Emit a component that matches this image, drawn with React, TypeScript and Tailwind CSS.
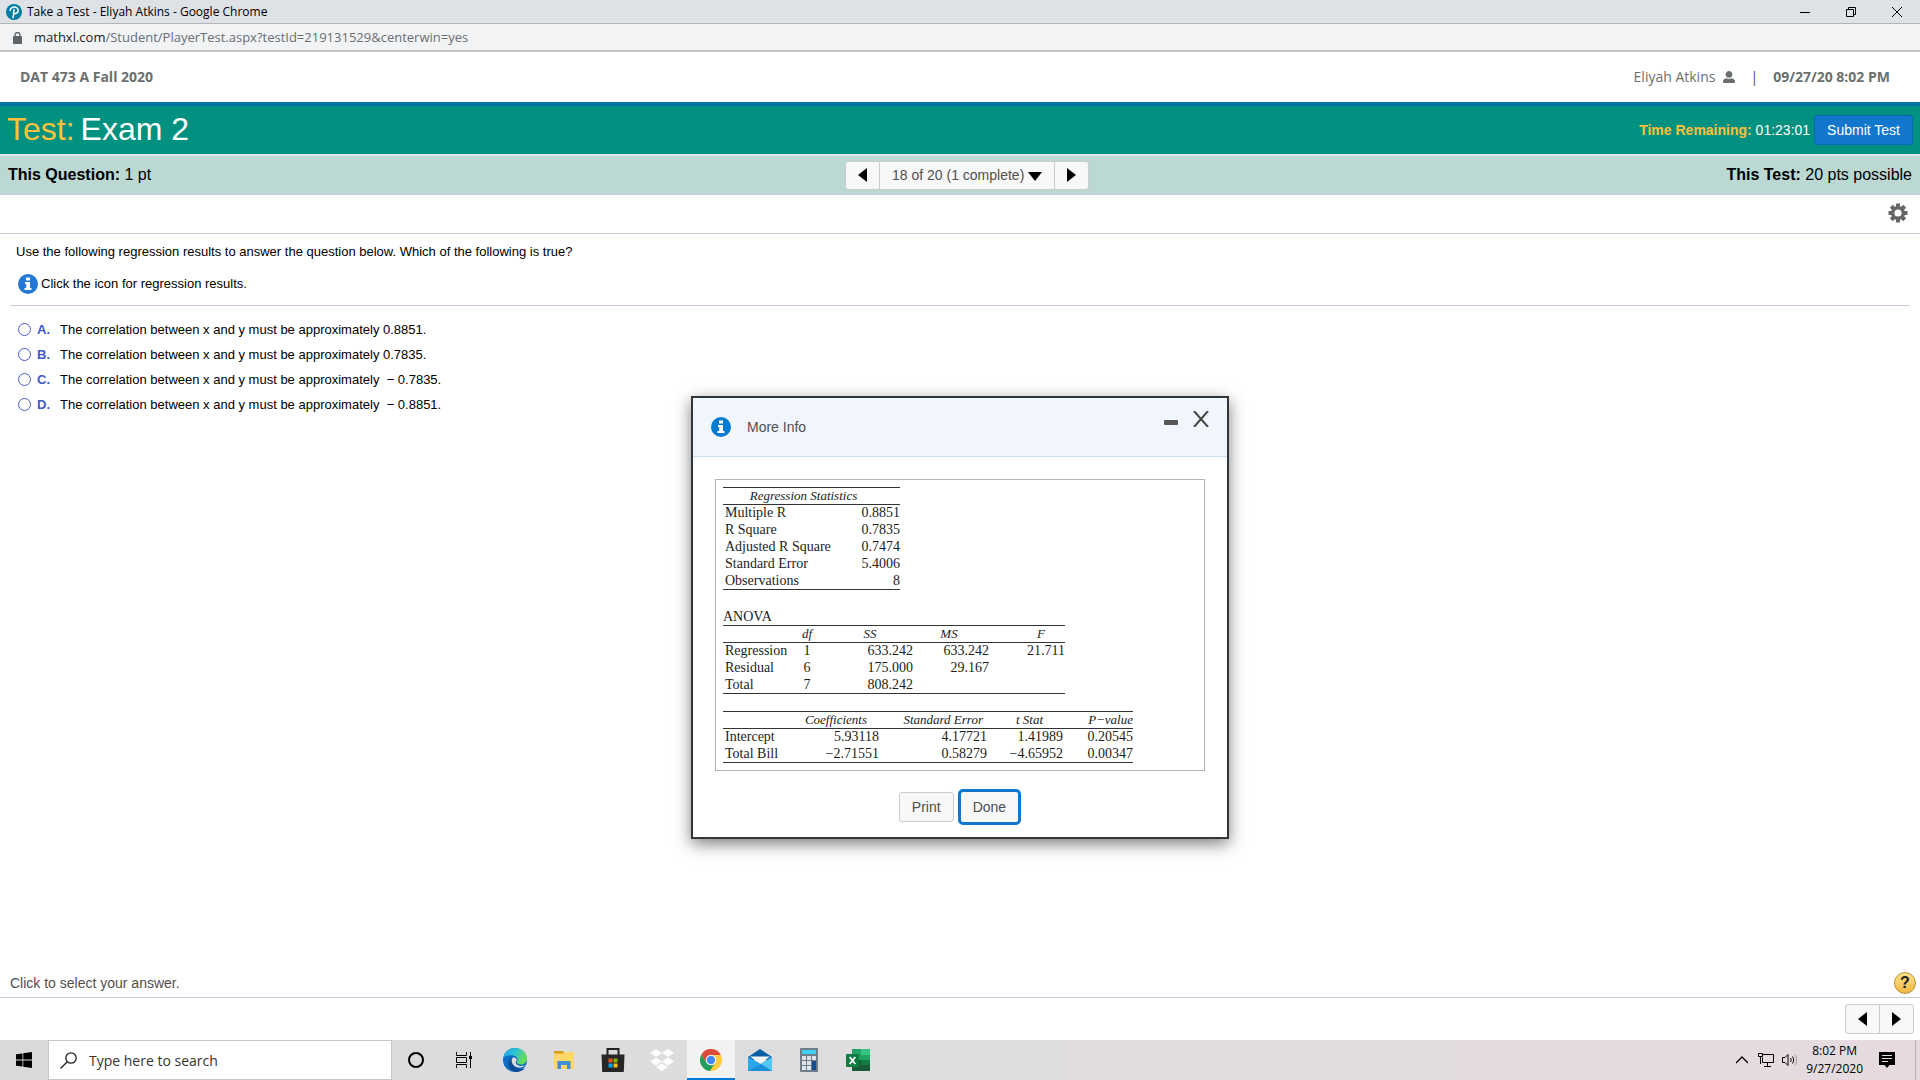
import React, { useState } from 'react'
import { FaUserAlt } from 'react-icons/fa'

const choices = [
  { letter: 'A', value: '0.8851' },
  { letter: 'B', value: '0.7835' },
  { letter: 'C', value: ' \u2212 0.7835' },
  { letter: 'D', value: ' \u2212 0.8851' }
]

const regressionStats = [
  ['Multiple R', '0.8851'],
  ['R Square', '0.7835'],
  ['Adjusted R Square', '0.7474'],
  ['Standard Error', '5.4006'],
  ['Observations', '8']
]

const anovaRows = [
  ['Regression', '1', '633.242', '633.242', '21.711'],
  ['Residual', '6', '175.000', '29.167', ''],
  ['Total', '7', '808.242', '', '']
]

const coefficientRows = [
  ['Intercept', '5.93118', '4.17721', '1.41989', '0.20545'],
  ['Total Bill', '\u22122.71551', '0.58279', '\u22124.65952', '0.00347']
]

const Triangle = ({ dir }: { dir: 'left' | 'right' | 'down' }) => {
  const points = {
    left: '11,0 11,14 2,7',
    right: '2,0 2,14 11,7',
    down: '0,2 14,2 7,11'
  }
  return (
    <svg width="14" height="14" viewBox="0 0 14 14" aria-hidden="true">
      <polygon points={points[dir]} fill="#000" />
    </svg>
  )
}

const InfoIcon = ({ color }: { color: string }) => (
  <svg width="20" height="20" viewBox="0 0 20 20" aria-hidden="true">
    <circle cx="10" cy="10" r="10" fill={color} />
    <rect x="8" y="3.5" width="4" height="3" fill="#fff" />
    <path d="M7 8h5v6h1.5v2h-7v-2H8.200v-4H7z" fill="#fff" />
  </svg>
)

const PearsonLogo = () => (
  <svg width="16" height="16" viewBox="0 0 16 16" aria-hidden="true">
    <circle cx="8" cy="8" r="8" fill="#007fa3" />
    <path
      d="M4.200 6.400C4.600 3.800 7 2.800 9 3.100c2.700.4 3.700 2.600 3 4.500-.6 1.700-2.300 2.400-4.500 2.200M8 5.500c-.4 2.500-.2 4.800-.9 8"
      fill="none"
      stroke="#fff"
      strokeWidth="1.500"
      strokeLinecap="round"
    />
  </svg>
)

const Gear = () => (
  <svg width="20" height="20" viewBox="-10 -10 20 20" aria-hidden="true">
    <g fill="#666">
      {[0, 45, 90, 135].map(angle => (
        <rect key={angle} x="-2" y="-9.500" width="4" height="19" transform={`rotate(${angle})`} />
      ))}
      <circle r="7" />
    </g>
    <circle r="3.600" fill="#fff" />
  </svg>
)

const TitleBar = () => (
  <div className="flex h-6 items-center justify-between border-b border-[#b3b4b6] bg-[#dee1e6] pl-[6px]">
    <div className="flex items-center gap-[5px] text-xs text-black">
      <PearsonLogo />
      <span>Take a Test - Eliyah Atkins - Google Chrome</span>
    </div>
    <div className="flex">
      <button type="button" aria-label="Minimize window" className="flex h-5 w-[46px] items-center justify-center">
        <svg width="10" height="10" viewBox="0 0 10 10" stroke="#000"><path d="M0 5.500h10" /></svg>
      </button>
      <button type="button" aria-label="Restore window" className="flex h-5 w-[46px] items-center justify-center">
        <svg width="10" height="10" viewBox="0 0 10 10" fill="none" stroke="#000">
          <path d="M.5 2.500h7v7h-7zM2.500 2.500v-2h7v7h-2" />
        </svg>
      </button>
      <button type="button" aria-label="Close window" className="flex h-5 w-[46px] items-center justify-center">
        <svg width="10" height="10" viewBox="0 0 10 10" stroke="#000"><path d="M0 0l10 10M10 0L0 10" /></svg>
      </button>
    </div>
  </div>
)

const AddressBar = () => (
  <div className="flex h-7 items-center gap-3 border-b-2 border-[#c2c3c5] bg-[#f1f3f4] pt-px pl-[13px] text-[13px] text-[#6b6e72]">
    <svg width="9" height="12" viewBox="0 0 9 12" aria-hidden="true">
      <rect y="4" width="9" height="8" rx="1" fill="#5f6368" />
      <path d="M2 4.500V3a2.500 2.500 0 0 1 5 0v1.500" fill="none" stroke="#5f6368" strokeWidth="1.300" />
    </svg>
    <span>
      <span className="text-[#202124]">mathxl.com</span>/Student/PlayerTest.aspx?testId=219131529&amp;centerwin=yes
    </span>
  </div>
)

const CourseHeader = () => (
  <header className="flex h-[50px] items-center justify-between bg-white pr-[30px] pl-5 font-['Open_Sans',sans-serif] text-sm text-[#6a7070]">
    <span className="font-bold">DAT 473 A Fall 2020</span>
    <div className="flex items-center">
      <span>Eliyah Atkins</span>
      <FaUserAlt className="ml-2 size-3" />
      <span className="mx-[15px] text-[#4a4a8a]">|</span>
      <span className="font-bold">09/27/20 8:02 PM</span>
    </div>
  </header>
)

const TestBar = () => (
  <div className="flex h-[52px] items-center justify-between border-t-4 border-[#0076a3] bg-[#009180] px-[7px] text-white">
    <h1 className="flex gap-[6px] pb-[2px] text-[32px] leading-9">
      <span className="text-[#ffc13b]">Test:</span>
      <span>Exam 2</span>
    </h1>
    <div className="flex items-center gap-1 text-sm">
      <span>
        <b className="text-[#ffc13b]">Time Remaining:</b> 01:23:01
      </span>
      <button type="button" className="h-[30px] rounded-[3px] border border-[#0b66b8] bg-[#1177cc] px-3">
        Submit Test
      </button>
    </div>
  </div>
)

const QuestionBar = () => (
  <div className="grid h-[41px] grid-cols-[1fr_auto_1fr] items-center border-t-2 border-b border-t-[#dfe6f0] border-b-[#c8cedb] bg-[#bbd8d2] px-2 text-base text-black">
    <span><b>This Question:</b> 1 pt</span>
    <div className="ml-[14px] flex h-[29px] rounded-[3px] border border-[#cccccc] bg-[#f8f8f8] text-sm text-[#4f4f4f]">
      <button type="button" aria-label="Previous question" className="flex w-[33px] items-center justify-center">
        <Triangle dir="left" />
      </button>
      <div className="relative w-[176px] border-x border-[#cccccc]">
        <select aria-label="Question list" className="h-full w-full appearance-none bg-transparent pl-3">
          <option>18 of 20 (1 complete)</option>
        </select>
        <span className="pointer-events-none absolute top-2 right-3">
          <Triangle dir="down" />
        </span>
      </div>
      <button type="button" aria-label="Next question" className="flex w-[33px] items-center justify-center">
        <Triangle dir="right" />
      </button>
    </div>
    <span className="text-right"><b>This Test:</b> 20 pts possible</span>
  </div>
)

const RegressionTables = () => (
  <div className="border border-[#b5b5b5] bg-white p-[7px] font-['Liberation_Serif',serif] text-sm leading-4 text-[#1c1c1c]">
    <table className="w-[177px] table-fixed border-collapse border-b border-[#333]">
      <colgroup>
        <col className="w-[125px]" />
        <col className="w-[52px]" />
      </colgroup>
      <thead>
        <tr className="border-y border-[#333] text-[13px]">
          <th colSpan={2} className="h-[17px] p-0 pr-4 text-center font-normal italic">Regression Statistics</th>
        </tr>
      </thead>
      <tbody>
        {regressionStats.map(([label, value]) => (
          <tr key={label}>
            <td className="h-[17px] p-0 pl-[2px]">{label}</td>
            <td className="p-0 text-right">{value}</td>
          </tr>
        ))}
      </tbody>
    </table>

    <table className="mt-[19px] w-[342px] table-fixed border-collapse border-b border-[#333]">
      <caption className="text-left leading-4">ANOVA</caption>
      <colgroup>
        <col className="w-[72px]" />
        <col className="w-6" />
        <col className="w-[94px]" />
        <col className="w-[76px]" />
        <col className="w-[76px]" />
      </colgroup>
      <thead>
        <tr className="border-y border-[#333] text-[13px] italic">
          <td className="h-[17px] p-0" />
          <th className="p-0 text-center font-normal">df</th>
          <th className="p-0 pl-2 text-center font-normal">SS</th>
          <th className="p-0 pr-1 text-center font-normal">MS</th>
          <th className="p-0 pr-5 text-right font-normal">F</th>
        </tr>
      </thead>
      <tbody>
        {anovaRows.map(([label, df, ss, ms, f]) => (
          <tr key={label}>
            <td className="h-[17px] p-0 pl-[2px]">{label}</td>
            <td className="p-0 text-center">{df}</td>
            <td className="p-0 text-right">{ss}</td>
            <td className="p-0 text-right">{ms}</td>
            <td className="p-0 text-right">{f}</td>
          </tr>
        ))}
      </tbody>
    </table>

    <table className="mt-[17px] w-[410px] table-fixed border-collapse border-b border-[#333]">
      <colgroup>
        <col className="w-[72px]" />
        <col className="w-[84px]" />
        <col className="w-[108px]" />
        <col className="w-[76px]" />
        <col className="w-[70px]" />
      </colgroup>
      <thead>
        <tr className="border-y border-[#333] text-right text-[13px] italic">
          <td className="h-[17px] p-0" />
          <th className="p-0 pr-3 font-normal">Coefficients</th>
          <th className="p-0 pr-1 font-normal">Standard Error</th>
          <th className="p-0 pr-5 font-normal">t Stat</th>
          <th className="p-0 font-normal">P&#8722;value</th>
        </tr>
      </thead>
      <tbody>
        {coefficientRows.map(([label, ...values]) => (
          <tr key={label}>
            <td className="h-[17px] p-0 pl-[2px]">{label}</td>
            {values.map((value, index) => (
              <td key={index} className="p-0 text-right">{value}</td>
            ))}
          </tr>
        ))}
      </tbody>
    </table>
  </div>
)

const MoreInfoDialog = () => (
  <div
    role="dialog"
    aria-label="More Info"
    className="w-[538px] border-2 border-[#333638] bg-white text-sm text-[#4f4f4f] shadow-[0_5px_15px_rgba(0,0,0,0.5)]"
  >
    <div className="flex h-[59px] items-center border-b border-[#c5e1f7] bg-[#f1f6fe] pr-4 pl-[18px]">
      <InfoIcon color="#047bd1" />
      <h2 className="ml-4 grow">More Info</h2>
      <div className="flex gap-[10px] pb-4">
        <button type="button" aria-label="Minimize" className="flex size-5 items-center justify-center">
          <svg width="14" height="14" viewBox="0 0 14 14"><rect y="8" width="14" height="5" rx="1" fill="#555" /></svg>
        </button>
        <button type="button" aria-label="Close" className="flex size-5 items-center justify-center">
          <svg width="16" height="16" viewBox="0 0 16 16" stroke="#444" strokeWidth="2"><path d="M1 0l14 16M15 0L1 16" /></svg>
        </button>
      </div>
    </div>
    <div className="px-[22px] pt-[22px] pb-3">
      <RegressionTables />
      <div className="mt-[18px] flex items-center justify-center gap-1">
        <button type="button" className="h-[30px] rounded-[3px] border border-[#cccccc] bg-[#f8f8f8] px-3">
          Print
        </button>
        <button type="button" className="h-9 rounded-[5px] border-[3px] border-[#1177cc] bg-[#f8f8f8] px-3">
          Done
        </button>
      </div>
    </div>
  </div>
)

const Question = () => {
  const [selected, setSelected] = useState('')

  return (
    <div className="grow px-[10px] pt-2 text-[13px] leading-5 text-black">
      <p className="pl-[6px]">
        Use the following regression results to answer the question below. Which of the following is true?
      </p>
      <button type="button" className="mt-3 flex items-center gap-[3px] pl-2">
        <InfoIcon color="#2478d8" />
        <span>Click the icon for regression results.</span>
      </button>
      <fieldset className="mt-[11px] border-t border-[#c8cbdb] pt-[11px]">
        {choices.map(({ letter, value }) => (
          <label key={letter} className="flex h-[25px] items-center pl-2">
            <input
              type="radio"
              name="answer"
              checked={selected === letter}
              onChange={() => setSelected(letter)}
              className="size-[13px] appearance-none rounded-full border border-[#4a5bd0] bg-white checked:border-4"
            />
            <span className="w-[29px] pl-[6px] font-bold text-[#4356cc]">{letter}.</span>
            <span className="whitespace-pre">The correlation between x and y must be approximately {value}.</span>
          </label>
        ))}
      </fieldset>
    </div>
  )
}

const HelpFooter = () => (
  <div>
    <div className="flex h-[29px] items-center justify-between border-b border-[#c8cbdb] pr-1 pl-[10px] text-sm text-[#4f4f4f]">
      <span>Click to select your answer.</span>
      <button
        type="button"
        aria-label="Help"
        className="size-[22px] rounded-full border border-[#b8923a] bg-linear-to-b from-[#ffe08a] to-[#f0b840] text-base leading-5 font-bold text-[#222]"
      >
        ?
      </button>
    </div>
    <div className="flex h-[42px] items-center justify-end pr-[6px]">
      <div className="flex h-[30px] rounded-[3px] border border-[#cccccc] bg-[#f8f8f8]">
        <button type="button" aria-label="Previous question" className="flex w-[34px] items-center justify-center border-r border-[#cccccc]">
          <Triangle dir="left" />
        </button>
        <button type="button" aria-label="Next question" className="flex w-[33px] items-center justify-center">
          <Triangle dir="right" />
        </button>
      </div>
    </div>
  </div>
)

const CortanaIcon = () => (
  <svg width="24" height="24" viewBox="0 0 24 24" fill="none" stroke="#000" strokeWidth="2"><circle cx="12" cy="12" r="7" /></svg>
)

const TaskViewIcon = () => (
  <svg width="24" height="24" viewBox="0 0 24 24" fill="none" stroke="#000">
    <path d="M4.500 4v3.500h10V4M4.500 20v-3.500h10V20M4.500 9.500h10v5h-10zM18.500 4v16" />
    <path d="M17 8h3v3h-3z" fill="#000" stroke="none" />
  </svg>
)

const EdgeIcon = () => (
  <svg width="24" height="24" viewBox="0 0 24 24">
    <defs>
      <linearGradient id="edge-top" x1="0" y1="0" x2="1" y2="0.400">
        <stop offset="0" stopColor="#1fa2e0" />
        <stop offset="0.500" stopColor="#2fc2d8" />
        <stop offset="1" stopColor="#66dd55" />
      </linearGradient>
    </defs>
    <circle cx="12" cy="12" r="12" fill="#0f6fc6" />
    <path d="M.3 9.500C1.500 4 6.300 0 12 0c7 0 12 5 12 10.500 0 3.500-2.700 6-6 6-2.800 0-4.300-1.200-4.300-2.200 0-.7 1-1.100 1-2.800C14.700 9 11.800 7.200 8.500 7.200c-3.500 0-6.500 1-8.200 2.300z" fill="url(#edge-top)" />
    <path d="M8.500 12.500c0 4.500 4.500 8.500 10 8.500 1.500 0 2.500-.4 3.400-.7C19.700 22.800 16 24 12.500 24c-4.500-.8-7.500-5-7-9 .3-2.700 2.200-4.700 4.400-5.200-.9.8-1.400 1.700-1.400 2.700z" fill="#0c4a92" />
    <path d="M9.800 9.800c-2 1.700-1.300 6 1.700 8.200 3.300 2.400 8.300 2 11-1-1.300.7-2.800 1-4.500 1-3.500 0-5.300-1.700-5.300-3.700 0-.7 1-1.100 1-2.800 0-1.200-2.200-2.800-3.900-1.700z" fill="#dcdcde" />
  </svg>
)

const ExplorerIcon = () => (
  <svg width="24" height="24" viewBox="0 0 24 24">
    <path d="M2 3h9l2 3v3H2z" fill="#d99a12" />
    <path d="M2 5.500h9l1.500-1.500H22v17H2z" fill="#ffd768" />
    <path d="M5.500 13h13v8H15v-4H9v4H5.500z" fill="#3f8fd6" />
  </svg>
)

const StoreIcon = () => (
  <svg width="24" height="24" viewBox="0 0 24 24">
    <path d="M6.500 7V1h11v6" fill="none" stroke="#222" strokeWidth="2" />
    <path d="M.5 6.500h23L22.800 24H1.200z" fill="#262626" />
    <path d="M7.500 10.500h4v4h-4z" fill="#f25022" />
    <path d="M12.500 10.500h4v4h-4z" fill="#7fba00" />
    <path d="M7.500 15.500h4v4h-4z" fill="#00a4ef" />
    <path d="M12.500 15.500h4v4h-4z" fill="#ffb900" />
  </svg>
)

const DropboxIcon = () => (
  <svg width="24" height="24" viewBox="0 0 24 24" fill="#fdfdfd">
    <path d="M6 1l6 4-6 4-6-4zM18 1l6 4-6 4-6-4zM6 9.400l6 4-6 4-6-4zM18 9.400l6 4-6 4-6-4zM12 15l6 4-6 4-6-4z" />
  </svg>
)

const ChromeIcon = () => (
  <svg width="24" height="24" viewBox="0 0 24 24">
    <circle cx="12" cy="12" r="11" fill="#ffcd42" />
    <path d="M11 23l5.500-9H7L2.500 6.500A11 11 0 0 0 11 23z" fill="#1fa05c" />
    <path d="M12 12L7 14 2.500 6.500a11 11 0 0 1 19.200.5H12z" fill="#dd4b3e" />
    <circle cx="12" cy="12" r="5.200" fill="#fff" />
    <circle cx="12" cy="12" r="4.200" fill="#4688f1" />
  </svg>
)

const MailIcon = () => (
  <svg width="24" height="24" viewBox="0 0 24 24">
    <path d="M0 9l12-8 12 8v3H0z" fill="#0560a8" />
    <path d="M2 8.500h20L12 16z" fill="#f5f5f5" />
    <path d="M0 9l13 7L24 9v14H0z" fill="#27a9ea" />
    <path d="M24 9v14L13 16z" fill="#50c8f5" />
    <path d="M0 23l13-7 11 7z" fill="#1b90d8" />
  </svg>
)

const CalculatorIcon = () => (
  <svg width="24" height="24" viewBox="0 0 24 24">
    <rect x="3" width="18" height="24" rx="1" fill="#6f7c8a" />
    <rect x="5" y="2" width="14" height="4" fill="#3fd0f7" />
    <path d="M5 8h4v4H5zM10 8h4v4h-4zM15 8h4v4h-4zM5 13h4v4H5zM10 13h4v4h-4zM5 18h4v4H5zM10 18h4v4h-4z" fill="#dfe3e7" />
    <path d="M15 13h4v9h-4z" fill="#144a8f" />
  </svg>
)

const ExcelIcon = () => (
  <svg width="24" height="24" viewBox="0 0 24 24">
    <path d="M6 1h9v11H6z" fill="#21a366" />
    <path d="M15 1h9v6h-9z" fill="#33c481" />
    <path d="M15 7h9v5h-9z" fill="#21a366" />
    <path d="M6 12h9v11H6z" fill="#185c37" />
    <path d="M15 12h9v5h-9z" fill="#107c41" />
    <path d="M15 17h9v6h-9z" fill="#185c37" />
    <rect y="6" width="13" height="13" rx="1" fill="#107c41" />
    <path d="M3.700 9l5.600 7M9.300 9l-5.600 7" stroke="#fff" strokeWidth="1.800" />
  </svg>
)

const systemButtons = [
  { name: 'Cortana', icon: <CortanaIcon /> },
  { name: 'Task View', icon: <TaskViewIcon /> }
]

const apps = [
  { name: 'Microsoft Edge', icon: <EdgeIcon /> },
  { name: 'File Explorer', icon: <ExplorerIcon /> },
  { name: 'Microsoft Store', icon: <StoreIcon /> },
  { name: 'Dropbox', icon: <DropboxIcon /> },
  { name: 'Google Chrome', icon: <ChromeIcon />, active: true },
  { name: 'Mail', icon: <MailIcon /> },
  { name: 'Calculator', icon: <CalculatorIcon /> },
  { name: 'Excel', icon: <ExcelIcon /> }
]

const Taskbar = () => (
  <div className="flex h-10 bg-linear-to-r from-[#d9d9da] via-[#dfdde0] to-[#e6dadf] text-black">
    <button type="button" aria-label="Start" className="flex w-12 items-center justify-center">
      <svg width="16" height="16" viewBox="0 0 16 16"><path d="M0 2.300l6.500-.9v6.200H0zM7.300 1.200L16 0v7.600H7.300zM0 8.400h6.500v6.200L0 13.700zM7.300 8.400H16V16l-8.700-1.200z" /></svg>
    </button>
    <label className="flex w-[344px] items-center gap-3 border border-[#c8c8c8] bg-white pl-[11px]">
      <svg width="17" height="17" viewBox="0 0 17 17" fill="none" stroke="#222" strokeWidth="1.300" aria-hidden="true">
        <circle cx="11" cy="6" r="5.200" />
        <path d="M7.300 9.700L.5 16.500" />
      </svg>
      <input
        type="text"
        aria-label="Search"
        placeholder="Type here to search"
        className="min-w-0 grow pt-[2px] text-sm outline-none placeholder:text-[#333]"
      />
    </label>
    <div className="flex">
      {systemButtons.map(({ name, icon }) => (
        <button key={name} type="button" aria-label={name} className="flex w-12 items-center justify-center">
          {icon}
        </button>
      ))}
    </div>
    <div className="ml-[3px] flex gap-px">
      {apps.map(({ name, icon, active }) => (
        <button
          key={name}
          type="button"
          aria-label={name}
          className={
            active
              ? 'flex w-12 items-center justify-center border-b-2 border-[#0078d7] bg-[#f2f2f3] pt-[2px]'
              : 'flex w-12 items-center justify-center'
          }
        >
          {icon}
        </button>
      ))}
    </div>
    <div className="ml-auto flex items-center">
      <svg width="12" height="12" viewBox="0 0 12 12" fill="none" stroke="#000" strokeWidth="1.300"><path d="M0 9l6-6 6 6" /></svg>
      <svg width="16" height="16" viewBox="0 0 16 16" fill="none" stroke="#000" className="ml-[10px]">
        <path d="M4.500 2.500h11v8h-11v-5M9.500 11v3M6 14.500h7M.5 1.500h4v3h-4zM2.500 5v7" />
      </svg>
      <svg width="16" height="16" viewBox="0 0 16 16" fill="none" stroke="#000" className="ml-2">
        <path d="M.5 5.500h2.500l3-3v11l-3-3H.5zM8.500 6c.8 1.200.8 2.800 0 4M10.500 4.500c1.500 2 1.500 5 0 7" />
        <path d="M13 2.500c2.200 3 2.200 8 0 11" stroke="#999" />
      </svg>
      <div className="ml-2 text-center text-xs leading-[18px]">
        <div>8:02 PM</div>
        <div>9/27/2020</div>
      </div>
      <button type="button" aria-label="Notifications" className="mr-5 ml-4">
        <svg width="16" height="16" viewBox="0 0 16 16">
          <path d="M0 0h16v13h-5.500L8 16l-2.500-3H0z" />
          <path d="M3 3.500h10M3 6.500h10M3 9.500h6" stroke="#e6dadf" />
        </svg>
      </button>
      <div className="h-10 w-[5px] border-l border-[#b5abb0]" />
    </div>
  </div>
)

const App: React.FC = () => {
  return (
    <div className="flex min-h-screen flex-col bg-white font-['Liberation_Sans',Arial,sans-serif]">
      <div className="font-['Open_Sans',sans-serif]">
        <TitleBar />
        <AddressBar />
      </div>
      <CourseHeader />
      <TestBar />
      <QuestionBar />
      <main className="relative flex grow flex-col">
        <div className="flex h-[39px] items-center justify-end border-b border-[#c8cedb] pr-3 pb-[2px]">
          <button type="button" aria-label="Settings">
            <Gear />
          </button>
        </div>
        <Question />
        <HelpFooter />
        <div className="pointer-events-none absolute inset-0 flex items-center justify-center">
          <div className="pointer-events-auto">
            <MoreInfoDialog />
          </div>
        </div>
      </main>
      <div className="font-['Open_Sans',sans-serif]">
        <Taskbar />
      </div>
    </div>
  )
}

export default App
